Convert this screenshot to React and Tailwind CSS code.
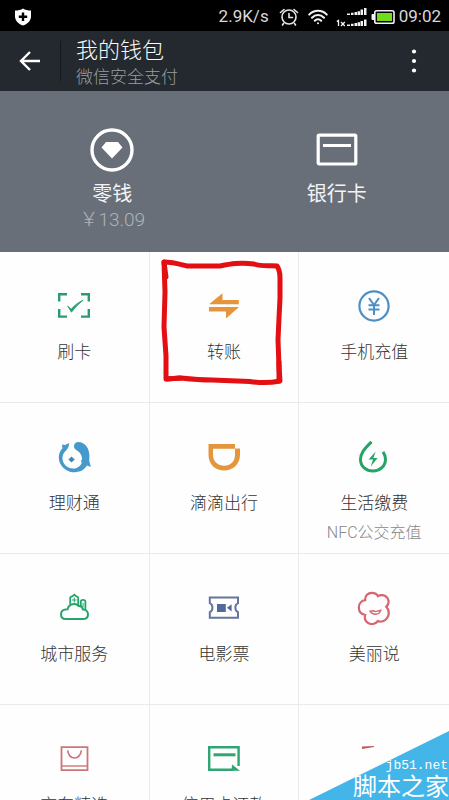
import React from 'react';

// --- ICONS ---
const ShieldIcon = () => (
  <svg width="18" height="18" viewBox="0 0 18 18">
    <path d="M9 0.5C11 2 14 2.6 17 2.6V8.5C17 13 13 16 9 17.6C5 16 1 13 1 8.5V2.6C4 2.6 7 2 9 0.5Z" fill="#fff" />
    <path d="M9 4.5V13M4.8 8.7H13.2" stroke="#000" strokeWidth="2.4" />
  </svg>
);

const AlarmIcon = () => (
  <svg width="20" height="18" viewBox="0 0 20 18" fill="none" stroke="#e6e6e6" strokeWidth="1.6" strokeLinecap="round">
    <circle cx="10" cy="9" r="7" />
    <path d="M10 5.5V9.5H13.5M1.5 4.5L5 1.5M18.5 4.5L15 1.5M4.5 15.5L3.5 17M15.5 15.5L16.5 17" />
  </svg>
);

const WifiIcon = () => (
  <svg width="20" height="16" viewBox="0 0 20 16" fill="none" stroke="#f2f2f2" strokeWidth="2" strokeLinecap="round">
    <path d="M1.2 5.6C6 0.4 14 0.4 18.8 5.6M4 8.8C7.4 5.2 12.6 5.2 16 8.8M6.8 11.7C8.6 9.9 11.4 9.9 13.2 11.7" />
    <circle cx="10" cy="14.2" r="1" fill="#f2f2f2" stroke="none" />
  </svg>
);

const SignalIcon = () => (
  <svg width="31" height="20" viewBox="0 0 31 20" fill="#f2f2f2">
    <path d="M11 6.5h3v1.5h-3zM15 5.8h2.5v2.2h-2.5zM18.5 5h2.5v3h-2.5zM21.5 4.2h2.5v3.8h-2.5zM24.5 2.5h2.5v5.5h-2.5zM28 1h2.5v7h-2.5z" />
    <path d="M11 17.5h3v1.5h-3zM15 16.8h2.5v2.2h-2.5zM18.5 16h2.5v3h-2.5zM21.5 15.2h2.5v3.8h-2.5zM24.5 14h2.5v5h-2.5zM28 12.5h2.5v6.5h-2.5z" />
    <path d="M0.8 14.5L2.5 13.5V19M5 15L8.8 19M8.8 15L5 19" fill="none" stroke="#f2f2f2" strokeWidth="1.3" />
  </svg>
);

const BatteryIcon = () => (
  <svg width="24" height="14" viewBox="0 0 24 14">
    <rect x="3.8" y="0.8" width="19.2" height="12.4" rx="1.8" fill="#000" stroke="#f2f2f2" strokeWidth="1.6" />
    <path d="M3 4H1.5Q0.5 4 0.5 5V9Q0.5 10 1.5 10H3Z" fill="#f2f2f2" />
    <rect x="6" y="3" width="15" height="8" fill="#6fdc1c" />
  </svg>
);

const BackIcon = () => (
  <svg width="22" height="20" viewBox="0 0 22 20" fill="none" stroke="#fff" strokeWidth="2.4">
    <path d="M21 10H2.5M11 1L2 10L11 19" />
  </svg>
);

const MoreIcon = () => (
  <svg width="6" height="24" viewBox="0 0 6 24" fill="#fff">
    <circle cx="3" cy="2.5" r="2.1" />
    <circle cx="3" cy="12" r="2.1" />
    <circle cx="3" cy="21.5" r="2.1" />
  </svg>
);

const ChangeIcon = () => (
  <svg width="44" height="44" viewBox="0 0 44 44">
    <circle cx="22" cy="22" r="20" fill="none" stroke="#fff" strokeWidth="3.4" />
    <path d="M16 14H28L32.5 19.5L22 30.5L11.5 19.5Z" fill="#fff" />
  </svg>
);

const CardIcon = () => (
  <svg width="44" height="44" viewBox="0 0 44 44">
    <rect x="3.2" y="7.2" width="37.6" height="28.8" rx="1" fill="none" stroke="#fff" strokeWidth="3.2" />
    <path d="M8 17.5H36" stroke="#fff" strokeWidth="3" />
  </svg>
);

const ScanIcon = () => (
  <svg width="34" height="32" viewBox="0 0 34 32" fill="none" stroke="#2a9d6e" strokeWidth="2.4">
    <path d="M2.2 11.5V4.2H10M24 4.2H31.8V11.5M31.8 19V26.6H24M10 26.6H2.2V19" />
    <path d="M10.6 16L14.2 19.2C17.5 15.4 21 12.5 26.2 10.2C21.5 13.8 18 17.5 14.5 22.2Z" fill="#2a9d6e" stroke="#2a9d6e" strokeWidth="0.8" />
  </svg>
);

const TransferIcon = () => (
  <svg width="34" height="32" viewBox="0 0 34 32" fill="#e5953b">
    <path d="M2 14.2L15.5 3.2V10H31.8V14.2Z" />
    <path d="M32 17L19 28.6V21.4H2V17Z" />
  </svg>
);

const PhoneIcon = () => (
  <svg width="34" height="32" viewBox="0 0 34 32" fill="none" stroke="#4b8fc5">
    <circle cx="17" cy="16" r="14.6" strokeWidth="2.2" />
    <path d="M12 8L17 15L22 8M17 15V25M11.5 15.2H22.5M11.5 19.6H22.5" strokeWidth="2" />
  </svg>
);

const FundIcon = () => (
  <svg width="34" height="32" viewBox="0 0 34 32" fill="#469acb">
    <path d="M5 3.4L8 4L12 2C12 5.5 11 7.8 8.6 10C5 13.4 4.6 18.6 7 22.4C9.6 26.6 15 28.6 20 27L24.4 24.6L27 27.6C22.6 31.6 16 32.4 10.6 29.8C4.2 26.8 1 20.6 2 14C2.4 11.4 3.6 9 5.4 7.4Z" />
    <path d="M21.4 1C28 1.2 32.6 7.4 32.4 15C32.4 17.6 32 19.6 32.6 21.4L34 26L30 24.6C28.4 27 26 29.6 22.6 30.4L19 27.4C22.4 26 24.4 23.6 24.8 21L23.6 20.2L25 18.6C25.2 14.8 23.6 11.4 20 9.4C18 8.4 16.8 7 17 5C17.2 2.6 19 1 21.4 1Z" />
    <path d="M14.6 15.4L16 17L17.8 18.4L16 20L14.6 21.6L13 20L11.4 18.4L13 17Z" fill="#3b86b5" />
  </svg>
);

const DidiIcon = () => (
  <svg width="34" height="32" viewBox="0 0 34 32" fill="#e5953b">
    <path d="M1.5 3H28V7.6H33V14C33 23 26 29.5 17.2 29.5C8 29.5 1.5 23 1.5 14ZM6 7.8V14C6 20.5 11 24.8 17.2 24.8C23.5 24.8 28 20.5 28 14V7.8Z" fillRule="evenodd" />
  </svg>
);

const UtilityIcon = () => (
  <svg width="34" height="32" viewBox="0 0 34 32" fill="none" stroke="#25a465">
    <path d="M14.5 0.8C7 8 3.5 12.5 3.5 18.5C3.5 25.5 9 30 16 30C23 30 28.5 25 28.5 18.2C28.5 15 27.4 12.8 26 10.8" strokeWidth="3" />
    <path d="M18.6 10.6L11.6 18.6H16L13.8 25.4L20.6 17H16.4Z" fill="#25a465" stroke="none" />
  </svg>
);

const CityIcon = () => (
  <svg width="34" height="32" viewBox="0 0 34 32" fill="none" stroke="#26a56b" strokeWidth="2">
    <path d="M8.5 27H25.5C29 27 31 25 31 22.4C31 19.6 29 17.6 26 17.6C25.5 15.2 24 13.6 21.6 14C20.2 12 18 11.6 15.5 12.2C12.6 12.8 11 14.8 10.6 17.2C6.5 17.2 4 19.2 4 22.2C4 25.2 5.8 27 8.5 27Z" />
    <path d="M13.2 12.2V6Q13.2 4.6 15.2 4.4L17.3 2.6L19.4 4.4Q21.2 4.6 21.2 6V13.4M23.8 14.4V9.4Q23.8 7.8 26 7.8Q28.4 7.8 28.4 9.4V18" strokeWidth="1.8" />
    <path d="M15 8H19.6M17.3 5.5V10.5M26.1 11V15" strokeWidth="1" />
  </svg>
);

const MovieIcon = () => (
  <svg width="34" height="32" viewBox="0 0 34 32">
    <path d="M2.8 5.4H31V11.2C27.5 12.8 27.5 18.6 31 20.2V25.8H2.8V20.2C6.3 18.6 6.3 12.8 2.8 11.2Z" fill="none" stroke="#66759f" strokeWidth="2" />
    <path d="M10 12H18.8V20H10ZM20 15.8L24.6 12.2V19.6Z" fill="#53689b" />
  </svg>
);

const FlowerIcon = () => (
  <svg width="34" height="34" viewBox="0 0 34 34" fill="none" stroke="#d7646f" strokeWidth="2.2">
    <path d="M8.2 9.2C7.8 4.5 11 1.8 15 1.8C17.8 1.8 20 3.2 21 5.2C23.5 3.4 28 3.6 30.4 7C32.4 10 31.6 13.8 29.2 15.8C31.6 18.2 33 23 30.2 26.8C27.8 30.4 23.8 31.4 21 30C18 33.6 13.6 33.8 10.6 31.6C8 29.8 7.4 26.6 8.2 24C4.2 23.4 1.8 20.6 1.8 16.6C1.8 12.4 4.6 9.6 8.2 9.2Z" />
    <path d="M13 20.2L16.5 19.8L18.4 20.6L23.8 19.2C22.6 24 15.8 24.8 13 20.2Z" strokeWidth="1.4" />
  </svg>
);

const BagIcon = () => (
  <svg width="34" height="32" viewBox="0 0 34 32" fill="none" stroke="#cc757b">
    <path d="M4.5 4.2H30.5V27.2H4.5Z" strokeWidth="1.8" />
    <path d="M4.5 23H30.5" strokeWidth="1.4" />
    <path d="M10.6 7.4C11.4 12.2 14 15 17.5 15S23.6 12.2 24.4 7.4" strokeWidth="1.6" />
  </svg>
);

const RepayIcon = () => (
  <svg width="34" height="32" viewBox="0 0 34 32" fill="none" stroke="#2fa571" strokeWidth="2.4">
    <path d="M31.6 23V4.2H2.2V26.8H26" />
    <path d="M6.5 11.8H28.5" strokeWidth="3" />
    <path d="M25 21.5L33 27.8H24.5Z" fill="#2fa571" stroke="none" />
  </svg>
);

const RedPenMark = () => (
  <svg className="pointer-events-none absolute inset-0" width="150" height="150" viewBox="0 0 150 150" fill="none" stroke="#e30f12" strokeWidth="5" strokeLinejoin="round" strokeLinecap="round">
    <path d="M14 10C22 10 29 12 37 14H70C80 12 90 10 104 12C113 15 121 13 127 14C129 17 130 21 130 26V46L129 66L128 88L129 115L130 129C120 131 110 131 100 129.5L62 128C50 128 40 127 31 126L16 127L16 104L14 75L15 40Z" />
    <path d="M14 10L16 25M17 127L30 126M129 110L129 129" />
  </svg>
);

// --- DATA ---
const services = [
  { name: '刷卡', icon: <ScanIcon /> },
  { name: '转账', icon: <TransferIcon />, marked: true },
  { name: '手机充值', icon: <PhoneIcon /> },
  { name: '理财通', icon: <FundIcon /> },
  { name: '滴滴出行', icon: <DidiIcon /> },
  { name: '生活缴费', icon: <UtilityIcon />, note: 'NFC公交充值' },
  { name: '城市服务', icon: <CityIcon /> },
  { name: '电影票', icon: <MovieIcon /> },
  { name: '美丽说', icon: <FlowerIcon /> },
  { name: '京东精选', icon: <BagIcon /> },
  { name: '信用卡还款', icon: <RepayIcon /> },
];

function App() {
  return (
    <div className="relative flex h-screen flex-col overflow-hidden bg-[#fefefe] font-['Roboto','Noto_Sans_CJK_SC',sans-serif]">
      {/* Status bar */}
      <div className="flex h-[31px] shrink-0 items-center bg-black pt-[2px] pr-2 pl-[14px] text-[17px] text-[#d8d8d8]">
        <ShieldIcon />
        <span className="mr-[10px] ml-auto">2.9K/s</span>
        <AlarmIcon />
        <span className="mr-2 ml-[9px]"><WifiIcon /></span>
        <SignalIcon />
        <span className="mx-1"><BatteryIcon /></span>
        <span>09:02</span>
      </div>

      {/* Header */}
      <header className="flex h-[60px] shrink-0 items-center bg-[#23292e] pr-8">
        <button aria-label="返回" className="flex h-10 w-[61px] items-center justify-center border-r border-[#15191c]"><BackIcon /></button>
        <div className="ml-[15px] flex-1 pt-1">
          <h1 className="text-[22px] leading-7 font-light text-[#fafafa]">我的钱包</h1>
          <p className="text-[17px] leading-6 font-light text-[#9a9da0]">微信安全支付</p>
        </div>
        <button aria-label="更多"><MoreIcon /></button>
      </header>

      {/* Wallet */}
      <section className="grid h-[161px] shrink-0 grid-cols-2 bg-[#696f79] text-[20px] text-[#f4f4f4]">
        <button className="flex flex-col items-center pt-[37px]">
          <ChangeIcon />
          <span className="mt-2 leading-7">零钱</span>
          <span className="text-[19px] leading-6 font-light text-[#b0b3b8]">￥13.09</span>
        </button>
        <button className="flex flex-col items-center pt-[37px]">
          <CardIcon />
          <span className="mt-2 leading-7">银行卡</span>
        </button>
      </section>

      {/* Services */}
      <main className="grid shrink-0 grid-cols-3">
        {services.map((s) => (
          <button key={s.name} className="relative flex h-[151px] flex-col items-center border-r border-b border-[#eaeaea] pt-[38px] nth-[3n]:border-r-0">
            <span className="flex h-8 items-center">{s.icon}</span>
            <span className="mt-[18px] text-[17px] leading-6 font-light text-[#333]">{s.name}</span>
            {s.note && <span className="mt-2 text-[16px] leading-5 font-light text-[#888]">{s.note}</span>}
            {s.marked && <RedPenMark />}
          </button>
        ))}
        <div className="flex justify-center pt-10">
          <svg width="34" height="8" viewBox="0 0 34 8"><path d="M5 1.5L17 1V2L11 3L5 4Z" fill="#c0575c" /></svg>
        </div>
      </main>

      {/* Watermark */}
      <div className="absolute right-0 bottom-0 flex h-[69px] w-[140px] flex-col items-end justify-end text-white">
        <svg className="absolute inset-0" width="140" height="69" viewBox="0 0 140 69"><path d="M140 0V69H0Z" fill="#43b5e8" /></svg>
        <span className="relative pr-px font-['Liberation_Mono',monospace] text-[13px] leading-4">jb51.net</span>
        <span className="relative text-[24px] leading-[26px]">脚本之家</span>
      </div>
    </div>
  );
}

export default App;
